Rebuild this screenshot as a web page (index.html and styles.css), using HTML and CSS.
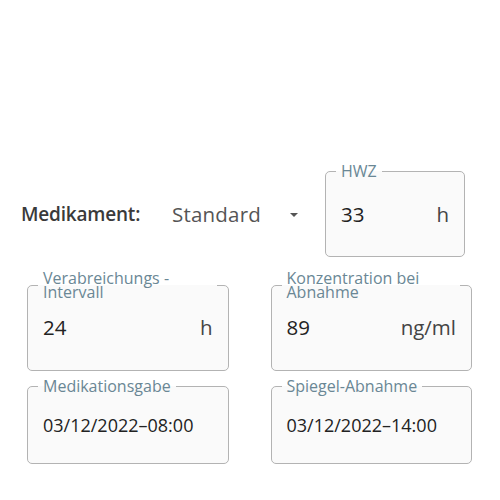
FILE: index.html
```html
<!DOCTYPE html>
<html lang="de">
<head>
<meta charset="utf-8">
<title>Medikament</title>
<link rel="stylesheet" href="styles.css">
</head>
<body>
<div class="page">
  <div class="top-row">
    <div class="med">
      <span class="med-label">Medikament:</span>
      <span class="select">
        <span class="select-value">Standard</span>
        <svg class="arrow" width="10" height="5" viewBox="0 0 10 5"><path d="M0 0l5 5 5-5z" fill="#555"/></svg>
      </span>
    </div>
    <fieldset class="field field-hwz">
      <legend>HWZ</legend>
      <div class="value value-hwz"><span>33</span><span class="unit">h</span></div>
    </fieldset>
  </div>
  <div class="grid">
    <fieldset class="field field-two">
      <legend>Verabreichungs - Intervall</legend>
      <div class="value value-two"><span>24</span><span class="unit">h</span></div>
    </fieldset>
    <fieldset class="field field-two">
      <legend>Konzentration bei Abnahme</legend>
      <div class="value value-two"><span>89</span><span class="unit">ng/ml</span></div>
    </fieldset>
    <fieldset class="field field-date">
      <legend>Medikationsgabe</legend>
      <div class="value value-date"><span>03/12/2022–08:00</span></div>
    </fieldset>
    <fieldset class="field field-date">
      <legend>Spiegel-Abnahme</legend>
      <div class="value value-date"><span>03/12/2022–14:00</span></div>
    </fieldset>
  </div>
</div>
</body>
</html>
```
FILE: styles.css
```css
html, body {
  margin: 0;
  padding: 0;
  background: #ffffff;
}
body {
  font-family: "Open Sans", "Noto Sans", sans-serif;
  color: #222;
}
.page {
  padding-top: 164px;
}
.top-row {
  display: flex;
  align-items: flex-start;
  padding-left: 21px;
}
.med {
  display: flex;
  align-items: center;
  height: 86px;
  margin-top: 7px;
}
.med-label {
  width: 151px;
  font-size: 19px;
  font-weight: 600;
  color: #3a3a3a;
  letter-spacing: -0.2px;
}
.select {
  display: flex;
  align-items: center;
  font-size: 20.5px;
  color: #555;
  letter-spacing: 0.2px;
}
.arrow {
  margin-left: 29px;
  margin-top: 1px;
  width: 8px;
  height: 4px;
}
.field {
  margin: 0;
  padding: 0;
  min-width: 0;
  border: 1px solid #b3b3b3;
  border-radius: 5px;
  background: #fafafa;
}
.field legend {
  margin-left: 10px;
  padding: 0 5px;
  max-width: calc(100% - 21px);
  box-sizing: border-box;
  font-size: 16px;
  line-height: 14px;
  color: #6a8795;
}
.field-hwz {
  margin-left: 27px;
  width: 140px;
  box-sizing: border-box;
  padding-bottom: 28px;
}
.value {
  display: flex;
  justify-content: space-between;
  align-items: center;
  height: 28px;
  padding: 0 15px;
  font-size: 20.5px;
  color: #222;
}
.unit {
  color: #444;
}
.value-hwz {
  margin-top: 22px;
}
.grid {
  display: grid;
  grid-template-columns: 1fr 1fr;
  column-gap: 42px;
  padding: 0 28px 0 27px;
  margin-top: 14px;
}
.field-two {
  padding-bottom: 29px;
}
.value-two {
  margin-top: 14px;
}
.field-date {
  margin-top: 8px;
  padding-bottom: 24px;
}
.value-date {
  margin-top: 18px;
  font-size: 18px;
}
```
